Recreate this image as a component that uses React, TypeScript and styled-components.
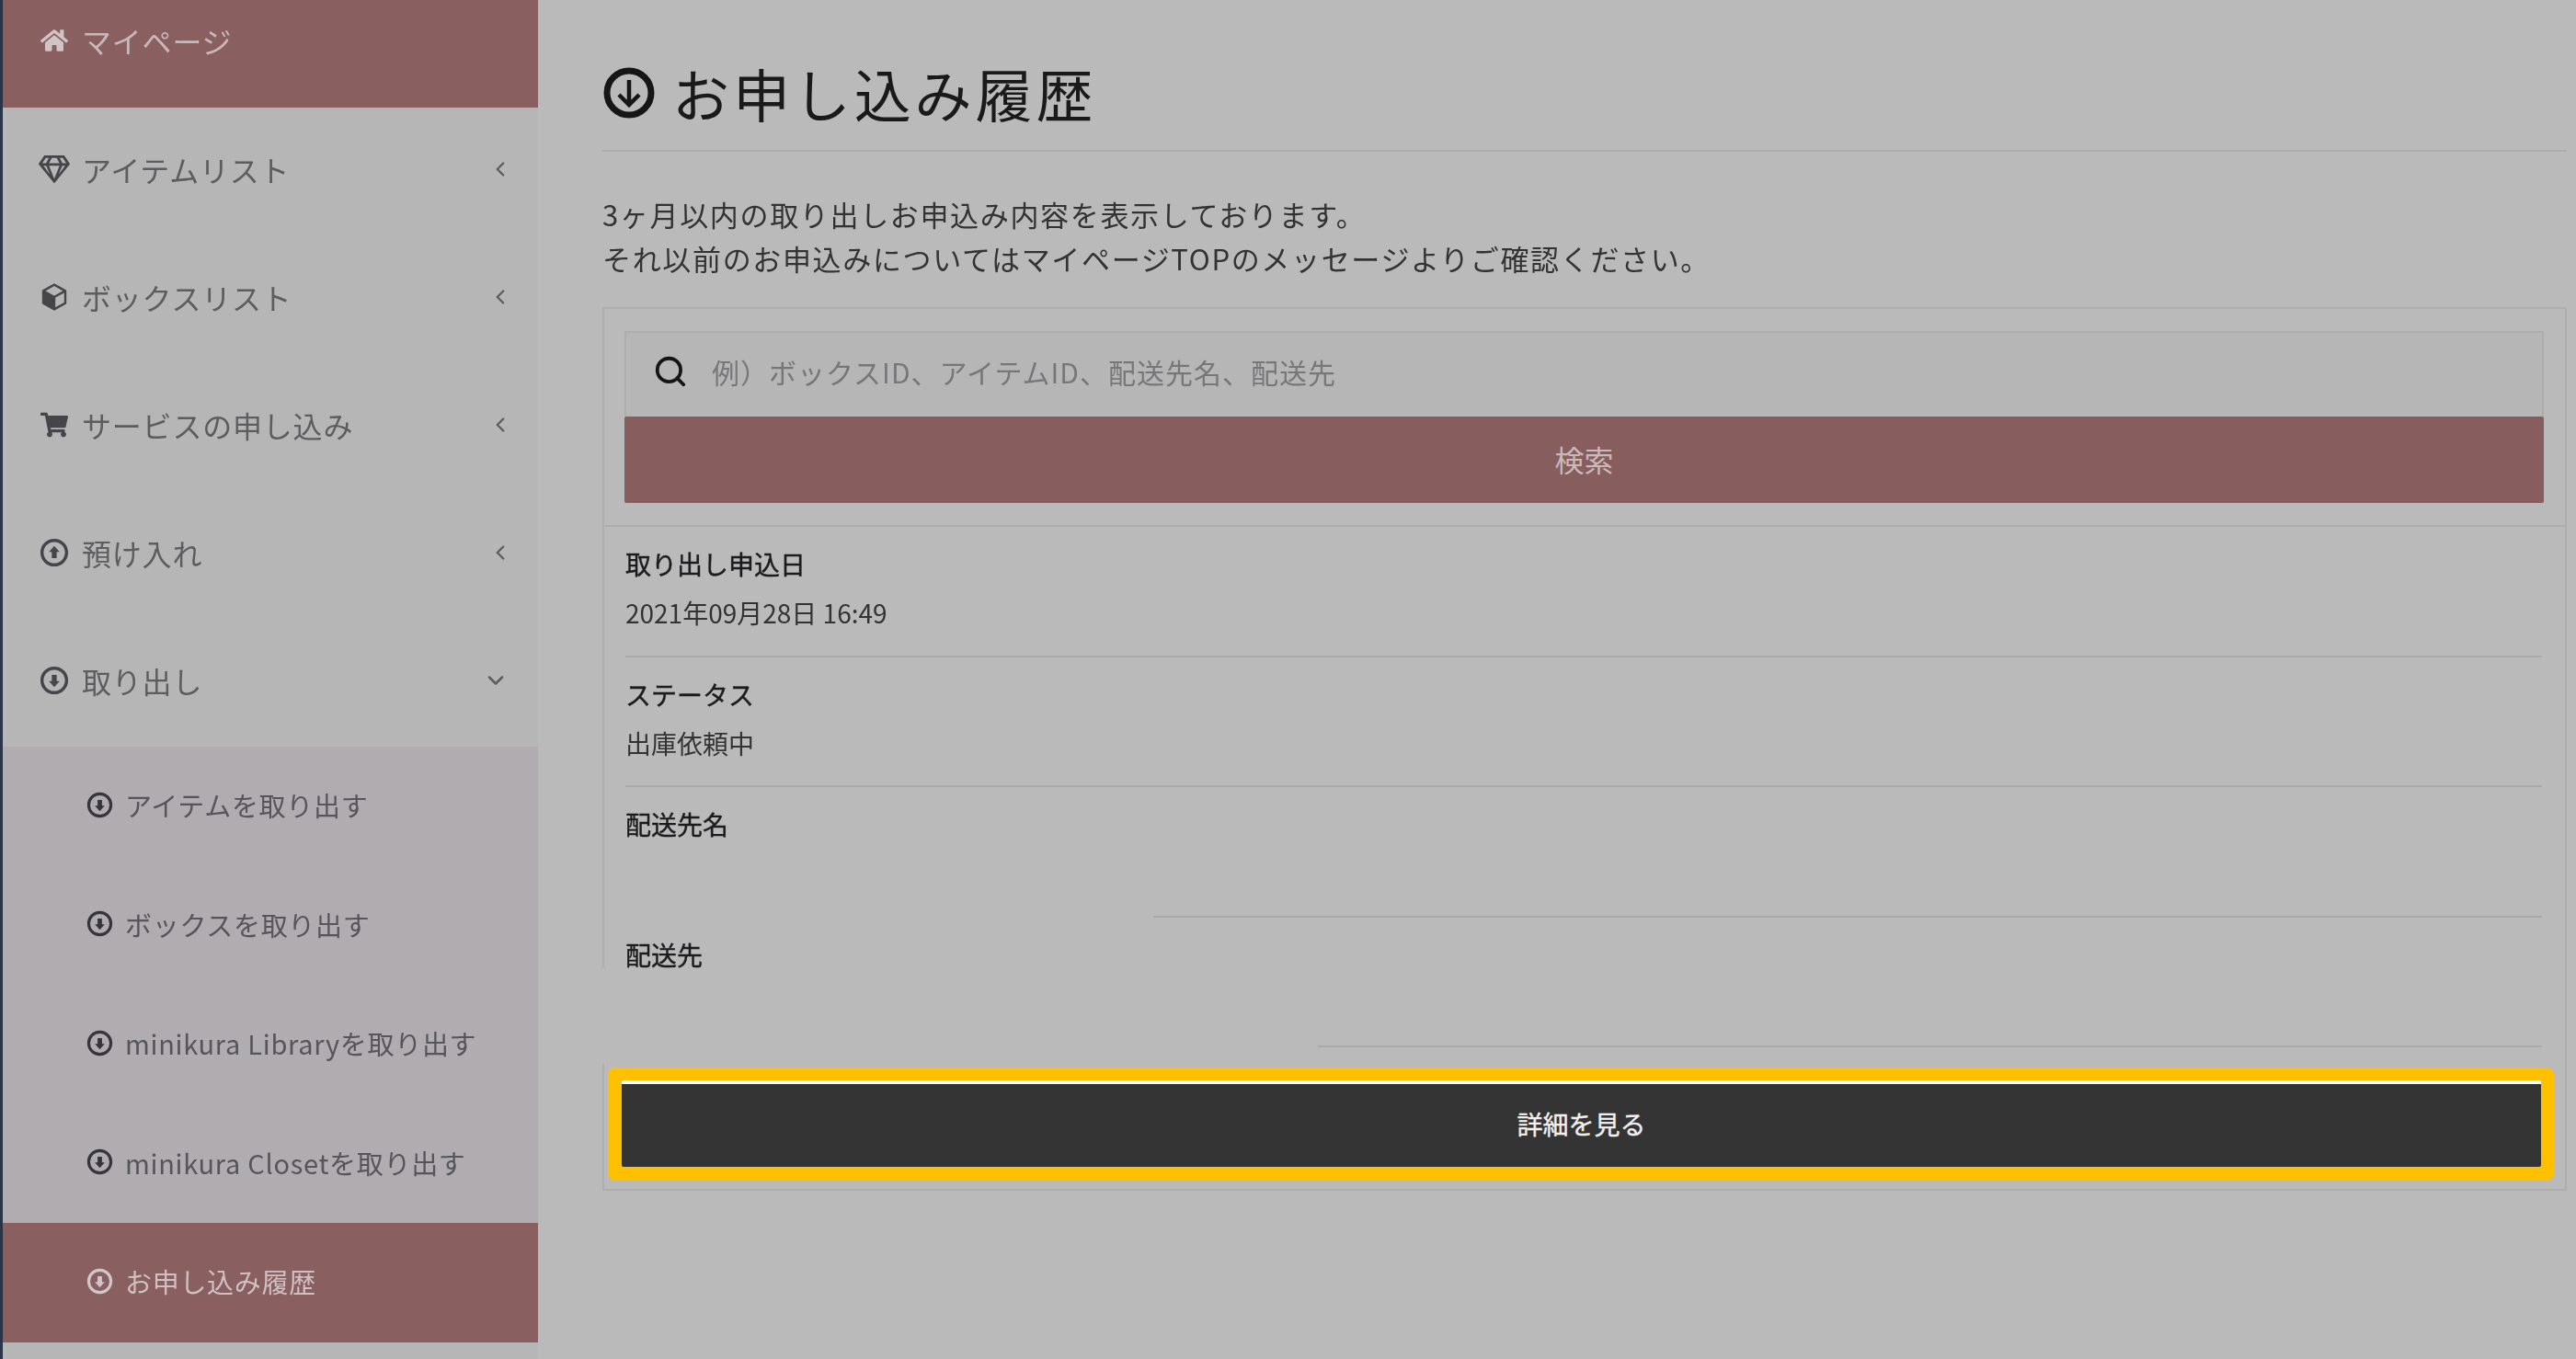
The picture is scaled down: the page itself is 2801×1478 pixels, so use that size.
import React from "react";
import styled, { createGlobalStyle, css } from "styled-components";
import { FaHome, FaRegGem, FaShoppingCart } from "react-icons/fa";
import { ChevronLeft, ChevronDown, Search } from "lucide-react";

const Global = createGlobalStyle`
  html, body { margin: 0; padding: 0; background: #bababa; }
  body { font-family: "Noto Sans CJK JP", "Noto Sans", sans-serif; }
  * { box-sizing: border-box; }
`;

const soft = css`
  filter: blur(0.55px);
`;

const Page = styled.div`
  display: flex;
  width: 2801px;
  height: 1478px;
  overflow: hidden;
  background: #bababa;
`;

const Sidebar = styled.nav`
  flex: 0 0 585px;
  display: flex;
  flex-direction: column;
  border-left: 3px solid #2c3547;
  background: #b6b6b6;
`;

const NavItem = styled.div<{ $active?: boolean; $scrolled?: boolean }>`
  flex: 0 0 ${(p) => (p.$scrolled ? 117 : 139)}px;
  display: flex;
  align-items: center;
  padding: 0 28px ${(p) => (p.$scrolled ? 29 : 6)}px 38px;
  font-size: 32px;
  line-height: 48px;
  letter-spacing: 0.8px;
  color: ${(p) => (p.$active ? "#c9b8ba" : "#5d5d60")};
  background: ${(p) => (p.$active ? "#8a5f60" : "transparent")};
`;

const NavIcon = styled.span<{ $color?: string }>`
  flex: 0 0 36px;
  margin-right: 12px;
  display: flex;
  align-items: center;
  justify-content: center;
  color: ${(p) => p.$color ?? "#46464a"};
  ${soft}
`;

const NavLabel = styled.span`
  flex: 1;
  ${soft}
`;

const NavArrow = styled.span<{ $open?: boolean }>`
  display: flex;
  align-items: center;
  margin-right: ${(p) => (p.$open ? 4 : 0)}px;
  color: #5d5d60;
  ${soft}
`;

const SubList = styled.div`
  display: flex;
  flex-direction: column;
  background: #b0acaf;
`;

const SubItem = styled.div<{ $active?: boolean }>`
  height: 129.5px;
  display: flex;
  align-items: center;
  padding: 0 0 3px 91px;
  font-size: 29px;
  letter-spacing: 0.7px;
  color: ${(p) => (p.$active ? "#cfc0c2" : "#56555a")};
  background: ${(p) => (p.$active ? "#8a5f60" : "transparent")};
`;

const SubIcon = styled.span<{ $active?: boolean }>`
  flex: 0 0 42px;
  display: flex;
  align-items: center;
  color: ${(p) => (p.$active ? "#d2c6c8" : "#36363a")};
  ${soft}
`;

const SubLabel = styled.span`
  ${soft}
`;

const Main = styled.main`
  flex: 1;
  display: flex;
  flex-direction: column;
  padding: 0 10px 0 70px;
`;

const Heading = styled.header`
  height: 165px;
  padding: 61px 0 0 1px;
  display: flex;
  align-items: flex-start;
  gap: 19px;
  border-bottom: 2px solid #aeaeae;
`;

const HeadingIcon = styled.svg`
  width: 56px;
  height: 56px;
  margin-top: 12px;
  flex: none;
  ${soft}
`;

const Title = styled.h1`
  margin: 0;
  font-size: 62px;
  line-height: 80px;
  font-weight: 400;
  letter-spacing: 3.9px;
  color: #1a1a1a;
  ${soft}
`;

const Lead = styled.p`
  margin: 44px 0 29px;
  font-size: 31px;
  line-height: 48px;
  letter-spacing: 1.66px;
  color: #333;
  ${soft}
`;

const Box = styled.section`
  position: relative;
  height: 961px;
  border: 2px solid #aeaeae;
  display: flex;
  flex-direction: column;
`;

const SearchArea = styled.form`
  margin: 0;
  padding: 24px 23px 24px 22px;
  border-bottom: 2px solid #aeaeae;
`;

const SearchField = styled.div`
  height: 93px;
  display: flex;
  align-items: center;
  gap: 26px;
  padding: 0 0 7px 29px;
  border: 2px solid #adadad;
  border-bottom: 0;
  background: #b6b6b6;
  font-size: 30px;
  color: #77777a;
  letter-spacing: 1px;
`;

const SearchText = styled.span`
  ${soft}
`;

const SearchButton = styled.div`
  height: 94px;
  display: flex;
  align-items: center;
  justify-content: center;
  background: #875d5d;
  border-radius: 2px;
  color: #c9b9b9;
  font-size: 32px;
  padding-bottom: 2px;
`;

const Row = styled.div`
  height: 141.5px;
  padding: 13px 25px 0 23px;
  display: flex;
  flex-direction: column;
`;

const RowLabel = styled.div`
  font-size: 28px;
  line-height: 54px;
  color: #1c1c1f;
  -webkit-text-stroke: 0.4px #1c1c1f;
  ${soft}
`;

const RowValue = styled.div`
  font-size: 28px;
  line-height: 52px;
  color: #333;
  ${soft}
`;

const RowRule = styled.div<{ $inset?: number }>`
  height: 2px;
  margin-top: auto;
  margin-left: ${(p) => p.$inset ?? 0}px;
  background: #a9a9a9;
`;

/* Blanked-out part of the reference, lying over the card's rows and border */
const RedactPatch = styled.div`
  position: absolute;
  left: -4px;
  top: 717px;
  width: 780px;
  height: 104px;
  background: #bababa;
`;

const ActionFrame = styled.div`
  position: relative;
  margin: 22px 12px 0 4px;
  height: 123px;
  padding: 14px 14px 15px 15px;
  background: #ffc000;
  border-radius: 8px;
`;

const DetailButton = styled.div`
  height: 94px;
  display: flex;
  align-items: center;
  justify-content: center;
  padding-bottom: 5px;
  background: #343434;
  border-top: 4px solid #fff;
  border-radius: 2px;
  color: #f0f0f0;
  font-size: 28px;
  -webkit-text-stroke: 0.4px #f0f0f0;
`;

const CircleArrow = ({ size, up }: { size: number; up?: boolean }) => (
  <svg width={size} height={size} viewBox="0 0 24 24">
    <g transform={up ? "rotate(180 12 12)" : undefined}>
      <circle cx="12" cy="12" r="10" fill="none" stroke="currentColor" strokeWidth="2.6" />
      <path d="M12 17.5 7.6 12.6H10V7.5h4v5.1h2.4Z" fill="currentColor" />
    </g>
  </svg>
);

const CubeIcon = () => (
  <svg width="32" height="34" viewBox="0 0 24 24">
    <path d="M3 7 12 12V22L3 17Z" fill="currentColor" />
    <path
      d="M12 2 21 7V17L12 22 3 17V7ZM3 7 12 12 21 7M12 12V22"
      fill="none"
      stroke="currentColor"
      strokeWidth="1.8"
      strokeLinejoin="round"
    />
  </svg>
);

const navItems = [
  { label: "アイテムリスト", icon: <FaRegGem size={34} /> },
  { label: "ボックスリスト", icon: <CubeIcon /> },
  { label: "サービスの申し込み", icon: <FaShoppingCart size={30} /> },
  { label: "預け入れ", icon: <CircleArrow size={32} up /> },
];

const subItems = [
  "アイテムを取り出す",
  "ボックスを取り出す",
  "minikura Libraryを取り出す",
  "minikura Closetを取り出す",
];

export default function App() {
  return (
    <Page>
      <Global />
      <Sidebar>
        <NavItem $active $scrolled>
          <NavIcon $color="#d0c4c6"><FaHome size={30} /></NavIcon>
          <NavLabel>マイページ</NavLabel>
        </NavItem>
        {navItems.map((n) => (
          <NavItem key={n.label}>
            <NavIcon>{n.icon}</NavIcon>
            <NavLabel>{n.label}</NavLabel>
            <NavArrow><ChevronLeft size={26} strokeWidth={2.2} /></NavArrow>
          </NavItem>
        ))}
        <NavItem>
          <NavIcon><CircleArrow size={32} /></NavIcon>
          <NavLabel>取り出し</NavLabel>
          <NavArrow $open><ChevronDown size={28} strokeWidth={2.2} /></NavArrow>
        </NavItem>
        <SubList>
          {subItems.map((s) => (
            <SubItem key={s}>
              <SubIcon><CircleArrow size={29} /></SubIcon>
              <SubLabel>{s}</SubLabel>
            </SubItem>
          ))}
          <SubItem $active>
            <SubIcon $active><CircleArrow size={29} /></SubIcon>
            <SubLabel>お申し込み履歴</SubLabel>
          </SubItem>
        </SubList>
      </Sidebar>
      <Main>
        <Heading>
          <HeadingIcon viewBox="0 0 56 56" fill="none" stroke="#161616">
            <circle cx="28" cy="28" r="24" strokeWidth="7" />
            <path d="M28 14v27M17 30l11 11 11-11" strokeWidth="4.5" />
          </HeadingIcon>
          <Title>お申し込み履歴</Title>
        </Heading>
        <Lead>
          3ヶ月以内の取り出しお申込み内容を表示しております。
          <br />
          それ以前のお申込みについてはマイページTOPのメッセージよりご確認ください。
        </Lead>
        <Box>
          <SearchArea>
            <SearchField>
              <Search size={38} strokeWidth={2.4} color="#151515" />
              <SearchText>例）ボックスID、アイテムID、配送先名、配送先</SearchText>
            </SearchField>
            <SearchButton>検索</SearchButton>
          </SearchArea>
          <Row>
            <RowLabel>取り出し申込日</RowLabel>
            <RowValue>2021年09月28日 16:49</RowValue>
            <RowRule />
          </Row>
          <Row>
            <RowLabel>ステータス</RowLabel>
            <RowValue>出庫依頼中</RowValue>
            <RowRule />
          </Row>
          <Row>
            <RowLabel>配送先名</RowLabel>
            <RowRule $inset={574} />
          </Row>
          <Row>
            <RowLabel>配送先</RowLabel>
            <RowRule />
          </Row>
          <RedactPatch />
          <ActionFrame>
            <DetailButton>詳細を見る</DetailButton>
          </ActionFrame>
        </Box>
      </Main>
    </Page>
  );
}
